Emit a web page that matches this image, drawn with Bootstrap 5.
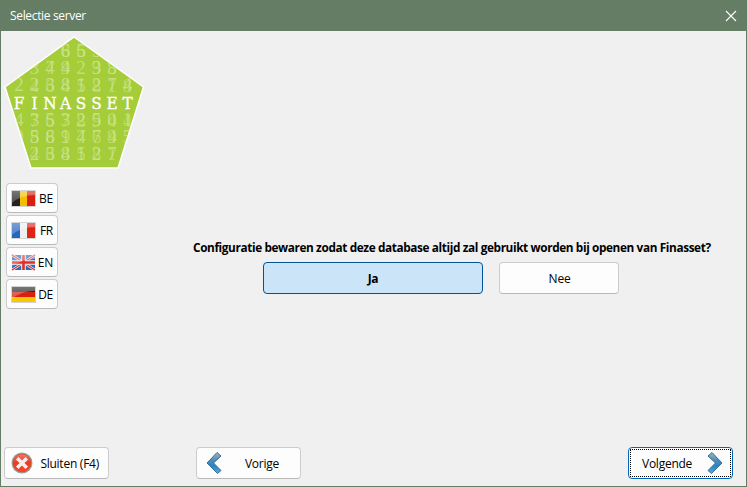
<!DOCTYPE html>
<html lang="nl">
<head>
<meta charset="utf-8">
<title>Selectie server</title>
<link href="https://cdn.jsdelivr.net/npm/bootstrap@5.3.0/dist/css/bootstrap.min.css" rel="stylesheet">
<style>
body{font:12px/16px "Open Sans","Noto Sans",sans-serif;color:#000;background:#f0f0f0;overflow:hidden}
.window{border:1px solid #647d64;width:747px;height:487px}
.titlebar{height:30px;background:#647d64;color:#fff;padding:0 9px 0 9px}
.titlebar span{letter-spacing:-.34px}
.close-x{width:12px;height:12px}
.brand-logo{width:149px;height:144px;display:block}
.brand-name{font-family:"DejaVu Serif Condensed","DejaVu Serif",serif;font-stretch:condensed;font-size:17px}
.side{width:149px}
.btn-win{--bs-btn-font-size:12px;--bs-btn-line-height:16px;--bs-btn-bg:#fdfdfd;--bs-btn-color:#000;--bs-btn-border-color:#ccc;--bs-btn-border-radius:4px;--bs-btn-padding-x:5px;--bs-btn-padding-y:0;border-bottom-color:#b9b9b9;letter-spacing:-.25px}
.langs{padding:8px 0 0 5px;gap:2px}
.langs .btn{width:52px;height:30px;padding:1px 4px 0 4px}
.flag{width:25px;height:17px}
.question{padding:208px 34px 0 43px}
.question p{font-size:11.8px;letter-spacing:-.385px;white-space:nowrap;margin-bottom:7px}
.answers{gap:16px;padding-left:70px}
.answers .btn{height:32px;padding-top:2px}
.btn-yes{width:220px;--bs-btn-bg:#cce4f7;--bs-btn-border-color:#005499;border-bottom-color:#005499}
.btn-no{width:120px;padding-left:6px}
.actions{height:39px;padding:0 13px 0 3px}
.actions .btn{width:105px;height:32px}
.actions .btn span span,.actions .btn>.ms-auto{padding-top:1px}
.btn-prev{margin-left:87px}
.btn-next{border-color:#0067c0;margin-left:auto;padding:1px}
.btn-next .dots{border:1px dotted #000;height:28px;padding:0 3px 0 11px}
.ico{width:24px;height:24px}
</style>
<script src="https://cdn.jsdelivr.net/npm/bootstrap@5.3.0/dist/js/bootstrap.bundle.min.js"></script>
</head>
<body>
<svg width="0" height="0" class="position-absolute" aria-hidden="true">
<defs>
<linearGradient id="gloss" x1="0" y1="0" x2="0" y2="1"><stop offset="0" stop-color="#fff" stop-opacity=".38"/><stop offset="1" stop-color="#fff" stop-opacity=".2"/></linearGradient>
<linearGradient id="blue" x1="0" y1="0" x2="0" y2="1"><stop offset="0" stop-color="#a5b4c0"/><stop offset=".35" stop-color="#548db7"/><stop offset=".65" stop-color="#2785c7"/><stop offset="1" stop-color="#55afe3"/></linearGradient>
<linearGradient id="red" x1="0" y1="0" x2="0" y2="1"><stop offset="0" stop-color="#ef7a68"/><stop offset=".5" stop-color="#e93b20"/><stop offset="1" stop-color="#fb4a20"/></linearGradient>
<clipPath id="penta"><path d="M74 37 143 87 118 168H31L5 87Z"/></clipPath>
</defs>
</svg>
<div class="window d-flex flex-column">
  <header class="titlebar d-flex align-items-center justify-content-between flex-shrink-0">
    <span>Selectie server</span>
    <svg class="close-x" viewBox="0 0 12 12"><path d="M1 1 11 11M11 1 1 11" stroke="#fff" stroke-width="1.100"/></svg>
  </header>
  <main class="d-flex flex-grow-1">
    <aside class="side">
      <svg class="brand-logo" viewBox="1 31 149 144">
        <path d="M74 37 143.500 87 118 168H31L5 87Z" fill="#a5cd39" stroke="#fff" stroke-width="1.500"/>
        <!-- two layers of digits printed over each other -->
        <g clip-path="url(#penta)" fill="#d8eba8" fill-opacity=".6" font-family="Liberation Serif" font-size="19" text-anchor="middle">
          <text x="65.500 81 96.500" y="56.500">655</text>
          <text x="34.500 50 65.500 81 96.500 112" y="73.500">344238</text>
          <text x="19 34.500 50 65.500 81 96.500 112 127.500" y="91">22381274</text>
          <text x="19 34.500 50 65.500 81 96.500 112 127.500" y="126">43532501</text>
          <text x="19 34.500 50 65.500 81 96.500 112 127.500" y="142.500">05814745</text>
          <text x="34.500 50 65.500 81 96.500 112" y="159.500">238127</text>
        </g>
        <g clip-path="url(#penta)" fill="#d8eba8" fill-opacity=".45" font-family="Liberation Serif" font-size="19" text-anchor="middle">
          <text x="65.500 81" y="57">86</text>
          <text x="50 65.500 96.500 112" y="74">7993</text>
          <text x="34.500 50 65.500 81 96.500 112 127.500" y="91.500">4645818</text>
          <text x="34.500 50 65.500 81 96.500 112 127.500" y="126.500">7678944</text>
          <text x="34.500 50 65.500 81 96.500 112" y="143">869769</text>
          <text x="34.500 50 65.500 81 96.500 112" y="160">464581</text>
        </g>
        <text class="brand-name" x="19 34.500 50 65.500 81 96.500 112 127.500" y="108.500" fill="#fff" stroke="#fff" stroke-width=".3" text-anchor="middle">FINASSET</text>
      </svg>
      <div class="langs d-flex flex-column">
        <button class="btn btn-win d-flex align-items-center justify-content-between"><svg class="flag" viewBox="0 0 25 17"><path fill="#222" d="M1 1h8v15H1z"/><path fill="#f5be00" d="M9 1h7v15H9z"/><path fill="#d91f10" d="M16 1h8v15h-8z"/><path fill="url(#gloss)" d="M1 1h23v4Q10 5 1 13z"/><path d="M.5.5h24v16H.5z" fill="none" stroke="#777" stroke-opacity=".3"/></svg>BE</button>
        <button class="btn btn-win d-flex align-items-center justify-content-between"><svg class="flag" viewBox="0 0 25 17"><path fill="#2465bd" d="M1 1h8v15H1z"/><path fill="#eee" d="M9 1h7v15H9z"/><path fill="#df2416" d="M16 1h8v15h-8z"/><path fill="url(#gloss)" d="M1 1h23v4Q10 5 1 13z"/><path d="M.5.5h24v16H.5z" fill="none" stroke="#777" stroke-opacity=".3"/></svg>FR</button>
        <button class="btn btn-win d-flex align-items-center justify-content-between"><svg class="flag" viewBox="0 0 25 17"><path fill="#286bc0" d="M1 1h23v15H1z"/><path d="M1 1 24 16M24 1 1 16" stroke="#f2e4e4" stroke-width="2.600"/><path d="M1 1 24 16M24 1 1 16" stroke="#dc3a34" stroke-width="1.100"/><path d="M12.500 1v15M1 8.500h23" stroke="#f4eeee" stroke-width="4.600"/><path d="M12.500 1v15M1 8.500h23" stroke="#dc3028" stroke-width="2.600"/><path fill="url(#gloss)" d="M1 1h23v4Q10 5 1 13z"/></svg>EN</button>
        <button class="btn btn-win d-flex align-items-center justify-content-between"><svg class="flag" viewBox="0 0 25 17"><path fill="#222" d="M1 1h23v5H1z"/><path fill="#d81f10" d="M1 6h23v5H1z"/><path fill="#fac800" d="M1 11h23v5H1z"/><path fill="url(#gloss)" d="M1 1h23v4Q10 5 1 13z"/><path d="M.5.5h24v16H.5z" fill="none" stroke="#777" stroke-opacity=".3"/></svg>DE</button>
      </div>
    </aside>
    <section class="question">
      <p class="fw-bold">Configuratie bewaren zodat deze database altijd zal gebruikt worden bij openen van Finasset?</p>
      <div class="answers d-flex">
        <button class="btn btn-win btn-yes fw-bold">Ja</button>
        <button class="btn btn-win btn-no">Nee</button>
      </div>
    </section>
  </main>
  <footer class="actions d-flex flex-shrink-0">
    <button class="btn btn-win d-flex align-items-center"><svg class="ico" viewBox="0 0 24 24"><circle cx="12" cy="12" r="10.500" fill="#9aa3a6"/><circle cx="12" cy="12" r="9" fill="url(#red)" stroke="#c84632" stroke-width=".7"/><path d="M8.500 8.500 15.500 15.500M15.500 8.500 8.500 15.500" stroke="#f4eeee" stroke-width="3.600" stroke-linecap="square"/></svg><span class="ms-auto me-1">Sluiten (F4)</span></button>
    <button class="btn btn-win btn-prev d-flex align-items-center"><svg class="ico" viewBox="0 0 24 24"><path d="M15 1.500 19 5 11.500 12 19 19.500 15.500 22.500 5 12Z" fill="url(#blue)" stroke="#386d91"/></svg><span class="ms-auto me-3">Vorige</span></button>
    <button class="btn btn-win btn-next"><span class="dots d-flex align-items-center justify-content-between"><span>Volgende</span><svg class="ico" viewBox="0 0 24 24"><path d="M9 1.500 5 5 12.500 12 5 19.500 8.500 22.500 19 12Z" fill="url(#blue)" stroke="#386d91"/></svg></span></button>
  </footer>
</div>
</body>
</html>
